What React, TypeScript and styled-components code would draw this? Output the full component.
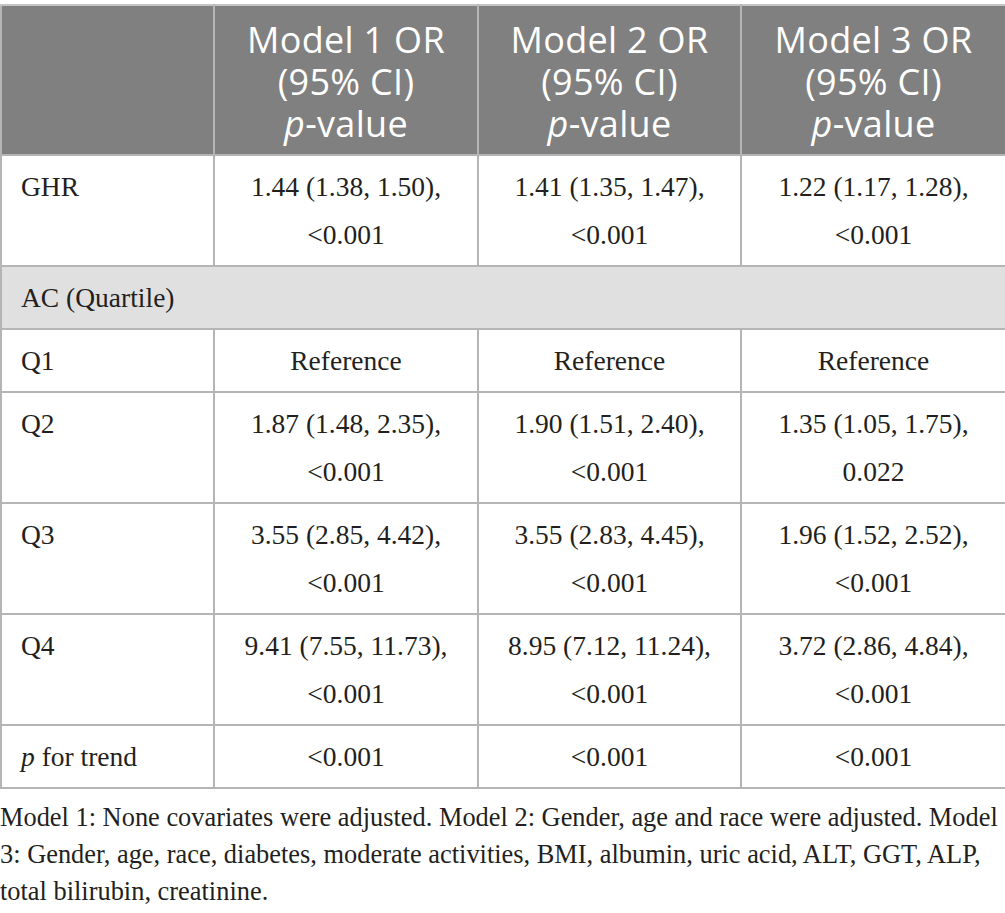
import React from 'react'
import styled, { createGlobalStyle } from 'styled-components'

const GlobalStyle = createGlobalStyle`
  html, body {
    margin: 0;
    padding: 0;
    background: #ffffff;
  }
`

const Page = styled.div`
  width: 1005px;
  padding-top: 4px;
  color: #231f20;
`

const Table = styled.table`
  width: 1005px;
  border-collapse: collapse;
  table-layout: fixed;
`

const HeadCell = styled.th`
  background-color: #808080;
  color: #ffffff;
  font-family: 'Open Sans', 'Noto Sans', sans-serif;
  font-weight: 400;
  font-size: 36px;
  letter-spacing: 0.3px;
  text-align: center;
  padding: 13px 4px 9px;
  border: 2px solid #b5b5b5;
  border-top: 2px solid #c4c4c4;
`

const HeadLine = styled.span`
  display: block;
  height: 42px;
  line-height: 42px;
`

const Cell = styled.td<{ $label?: boolean }>`
  font-family: 'Liberation Serif', 'Times New Roman', serif;
  font-size: 27.5px;
  line-height: 48px;
  padding: 7px ${({ $label }) => ($label ? '6px 5px 19px' : '8px 6px')};
  text-align: ${({ $label }) => ($label ? 'left' : 'center')};
  vertical-align: top;
  border: 2px solid #b5b5b5;
`

const SectionCell = styled.td`
  font-family: 'Liberation Serif', 'Times New Roman', serif;
  font-size: 27.5px;
  line-height: 48px;
  padding: 7px 8px 6px 19px;
  background-color: #e1e0e1;
  border: 2px solid #b5b5b5;
`

const Footnote = styled.p`
  margin: 10px 0 0;
  font-family: 'Liberation Serif', 'Times New Roman', serif;
  font-size: 26.4px;
  line-height: 37px;
`

type Row = { label: React.ReactNode; values: string[][] }

const rows: Row[] = [
  {
    label: 'Q1',
    values: [['Reference'], ['Reference'], ['Reference']],
  },
  {
    label: 'Q2',
    values: [
      ['1.87 (1.48, 2.35),', '<0.001'],
      ['1.90 (1.51, 2.40),', '<0.001'],
      ['1.35 (1.05, 1.75),', '0.022'],
    ],
  },
  {
    label: 'Q3',
    values: [
      ['3.55 (2.85, 4.42),', '<0.001'],
      ['3.55 (2.83, 4.45),', '<0.001'],
      ['1.96 (1.52, 2.52),', '<0.001'],
    ],
  },
  {
    label: 'Q4',
    values: [
      ['9.41 (7.55, 11.73),', '<0.001'],
      ['8.95 (7.12, 11.24),', '<0.001'],
      ['3.72 (2.86, 4.84),', '<0.001'],
    ],
  },
  {
    label: (
      <>
        <i>p</i> for trend
      </>
    ),
    values: [['<0.001'], ['<0.001'], ['<0.001']],
  },
]

const ghr = [
  ['1.44 (1.38, 1.50),', '<0.001'],
  ['1.41 (1.35, 1.47),', '<0.001'],
  ['1.22 (1.17, 1.28),', '<0.001'],
]

function Lines({ lines }: { lines: string[] }) {
  return (
    <>
      {lines.map((l, i) => (
        <React.Fragment key={i}>
          {i > 0 && <br />}
          {l}
        </React.Fragment>
      ))}
    </>
  )
}

export default function App() {
  return (
    <Page>
      <GlobalStyle />
      <Table>
        <colgroup>
          <col style={{ width: 213 }} />
          <col style={{ width: 264 }} />
          <col style={{ width: 263 }} />
          <col style={{ width: 265 }} />
        </colgroup>
        <thead>
          <tr>
            <HeadCell />
            {[1, 2, 3].map((n) => (
              <HeadCell key={n}>
                <HeadLine>Model {n} OR</HeadLine>
                <HeadLine>(95% CI)</HeadLine>
                <HeadLine>
                  <i>p</i>-value
                </HeadLine>
              </HeadCell>
            ))}
          </tr>
        </thead>
        <tbody>
          <tr>
            <Cell $label>GHR</Cell>
            {ghr.map((v, i) => (
              <Cell key={i}>
                <Lines lines={v} />
              </Cell>
            ))}
          </tr>
          <tr>
            <SectionCell colSpan={4}>AC (Quartile)</SectionCell>
          </tr>
          {rows.map((r, ri) => (
            <tr key={ri}>
              <Cell $label>{r.label}</Cell>
              {r.values.map((v, i) => (
                <Cell key={i}>
                  <Lines lines={v} />
                </Cell>
              ))}
            </tr>
          ))}
        </tbody>
      </Table>
      <Footnote>
        Model 1: None covariates were adjusted. Model 2: Gender, age and race were adjusted. Model
        3: Gender, age, race, diabetes, moderate activities, BMI, albumin, uric acid, ALT, GGT, ALP,
        total bilirubin, creatinine.
      </Footnote>
    </Page>
  )
}
